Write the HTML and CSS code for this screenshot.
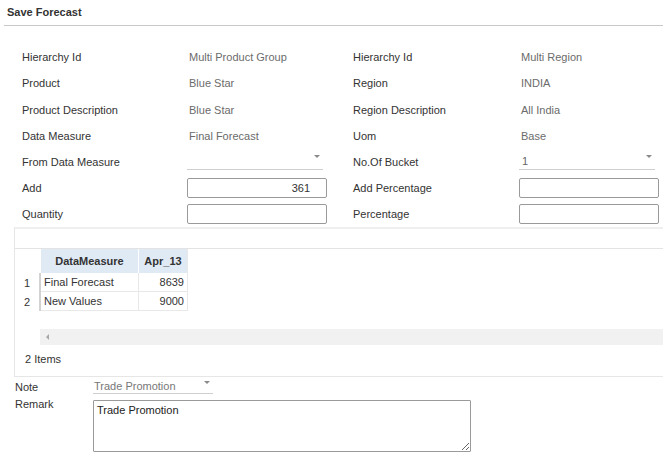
FILE: index.html
```html
<!DOCTYPE html>
<html>
<head>
<meta charset="utf-8">
<title>Save Forecast</title>
<link rel="stylesheet" href="styles.css">
</head>
<body>
<div class="dialog">
  <div class="title">Save Forecast</div>

  <div class="form">
    <div class="label">Hierarchy Id</div>
    <div class="value">Multi Product Group</div>
    <div class="label label-r">Hierarchy Id</div>
    <div class="value">Multi Region</div>

    <div class="label">Product</div>
    <div class="value">Blue Star</div>
    <div class="label label-r">Region</div>
    <div class="value">INDIA</div>

    <div class="label">Product Description</div>
    <div class="value">Blue Star</div>
    <div class="label label-r">Region Description</div>
    <div class="value">All India</div>

    <div class="label">Data Measure</div>
    <div class="value">Final Forecast</div>
    <div class="label label-r">Uom</div>
    <div class="value">Base</div>

    <div class="label">From Data Measure</div>
    <div class="select"><span class="select-text"></span><span class="caret"></span></div>
    <div class="label label-r">No.Of Bucket</div>
    <div class="select"><span class="select-text">1</span><span class="caret"></span></div>

    <div class="label">Add</div>
    <div class="input">361</div>
    <div class="label label-r">Add Percentage</div>
    <div class="input"></div>

    <div class="label">Quantity</div>
    <div class="input"></div>
    <div class="label label-r">Percentage</div>
    <div class="input"></div>
  </div>

  <div class="grid-box">
    <div class="toolbar"></div>
    <div class="grid-content">
      <table class="grid-table">
        <thead>
          <tr>
            <th class="corner"></th>
            <th class="col-measure">DataMeasure</th>
            <th class="col-apr">Apr_13</th>
          </tr>
        </thead>
        <tbody>
          <tr>
            <td class="num">1</td>
            <td>Final Forecast</td>
            <td class="amt">8639</td>
          </tr>
          <tr>
            <td class="num">2</td>
            <td>New Values</td>
            <td class="amt">9000</td>
          </tr>
        </tbody>
      </table>
    </div>
    <div class="hscroll"><span class="arrow-left"></span></div>
    <div class="grid-footer">2 Items</div>
  </div>

  <div class="note-form">
    <div class="note-label">Note</div>
    <div class="select note-select"><span class="select-text">Trade Promotion</span><span class="caret"></span></div>
    <div class="note-label remark-label">Remark</div>
    <textarea class="remark">Trade Promotion</textarea>
  </div>
</div>
</body>
</html>
```

FILE: styles.css
```css
* {
  box-sizing: border-box;
}

body {
  margin: 0;
  background: #fff;
  color: #333;
  font: 11px "Liberation Sans", Arial, sans-serif;
}

.title {
  margin: 0 4px;
  padding-left: 3px;
  height: 26px;
  line-height: 24px;
  font-weight: bold;
  color: #333;
  border-bottom: 1px solid #c8c8c8;
}

.form {
  display: grid;
  grid-template-columns: 165px 140px 192px 140px;
  grid-template-rows: repeat(4, 26.5px) 24.5px 27px 26px;
  align-items: center;
  margin-top: 17.5px;
  padding-left: 22px;
}

.label {
  color: #333;
  white-space: nowrap;
}

.label-r {
  padding-left: 26px;
}

.value {
  padding-left: 2px;
  color: #6b6b6b;
  white-space: nowrap;
}

.select {
  display: flex;
  justify-content: space-between;
  width: 136px;
  height: 17px;
  line-height: 16px;
  padding-left: 3px;
  border-bottom: 1px solid #cfcfcf;
  color: #666;
}

.caret {
  flex: none;
  width: 0;
  height: 0;
  margin: 2px 3px 0 0;
  border-left: 3px solid transparent;
  border-right: 3px solid transparent;
  border-top: 3px solid #8a8a8a;
}

.input {
  width: 140px;
  height: 20px;
  line-height: 18px;
  padding-right: 16px;
  text-align: right;
  color: #333;
  border: 1px solid #9a9a9a;
  border-radius: 2px;
}

.grid-box {
  width: 649px;
  margin-left: 14px;
  border-top: 2px solid #efefef;
  border-left: 1px solid #e6e6e6;
  border-bottom: 1px solid #e6e6e6;
}

.toolbar {
  height: 20px;
  border-bottom: 1px solid #e3e3e3;
}

.grid-content {
  height: 80px;
}

.grid-table {
  border-collapse: separate;
  border-spacing: 0;
}

.grid-table th {
  height: 24px;
  padding: 0 4px;
  font-weight: bold;
  color: #333;
  background: #e0eaf5;
  border-right: 1px solid #fff;
  text-align: center;
}

.grid-table th.corner {
  width: 26px;
  background: #fff;
  border-right: none;
}

.grid-table th.col-measure {
  width: 98px;
}

.grid-table th.col-apr {
  width: 49px;
  border-right: 1px solid #e8e8e8;
}

.grid-table td {
  height: 19px;
  padding: 0 3px;
  line-height: 18px;
  color: #333;
  border-bottom: 1px solid #e8e8e8;
  border-right: 1px solid #e8e8e8;
  white-space: nowrap;
}

.grid-table td.num {
  text-align: center;
  border-bottom: none;
  border-right: 2px solid #d2d2d2;
}

.grid-table td.amt {
  text-align: right;
}

.hscroll {
  display: flex;
  align-items: center;
  height: 16px;
  margin-left: 25px;
  padding-left: 6px;
  background: #f1f1f1;
}

.arrow-left {
  width: 0;
  height: 0;
  border-top: 3px solid transparent;
  border-bottom: 3px solid transparent;
  border-right: 3px solid #a8a8a8;
}

.grid-footer {
  height: 31px;
  line-height: 28px;
  padding-left: 10px;
  color: #333;
}

.note-form {
  display: grid;
  grid-template-columns: 78px auto;
  grid-template-rows: 19px auto;
  row-gap: 4px;
  align-items: center;
  padding-left: 15px;
}

.note-label {
  color: #333;
}

.remark-label {
  align-self: start;
  line-height: 9px;
}

.note-select {
  width: 120px;
  height: 15px;
  line-height: 14px;
  padding-left: 1px;
  color: #777;
}

.remark {
  display: block;
  width: 378px;
  height: 52px;
  margin: 0;
  padding: 3px 3px;
  font: 11px "Liberation Sans", Arial, sans-serif;
  line-height: 13px;
  color: #222;
  border: 1px solid #9a9a9a;
  border-radius: 1px;
}
```
